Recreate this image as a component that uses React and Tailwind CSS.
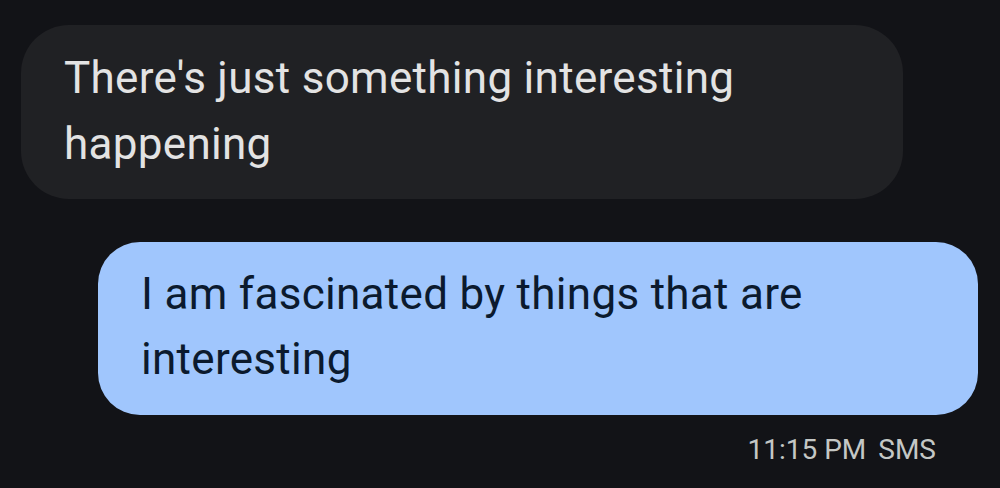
import React from "react";

const font = { fontFamily: "Roboto, 'Noto Sans', sans-serif" };

export default function App() {
  return (
    <div
      className="w-[1000px] h-[488px] overflow-hidden bg-[#121317] flex flex-col"
      style={font}
    >
      {/* incoming */}
      <div className="ml-[21px] mt-[25px] w-[882px] rounded-[48px] bg-[#202124] pl-[43px] pr-[40px] pt-[20px] pb-[22px] text-[44px] leading-[66px] tracking-[0.3px] text-[#e3e3e3]">
        There's just something interesting
        <br />
        happening
      </div>

      {/* outgoing */}
      <div className="ml-[98px] mt-[43px] w-[880px] rounded-[42px] bg-[#a0c6fd] pl-[43px] pr-[40px] pt-[20px] pb-[23px] text-[44px] leading-[65px] tracking-[0.3px] text-[#0b1a2e]">
        I am fascinated by things that are
        <br />
        interesting
      </div>

      <div className="mt-[18px] mr-[64px] flex justify-end gap-[12px] text-[28px] leading-[34px] text-[#c4c7c5]">
        <span>11:15 PM</span>
        <span>SMS</span>
      </div>
    </div>
  );
}
